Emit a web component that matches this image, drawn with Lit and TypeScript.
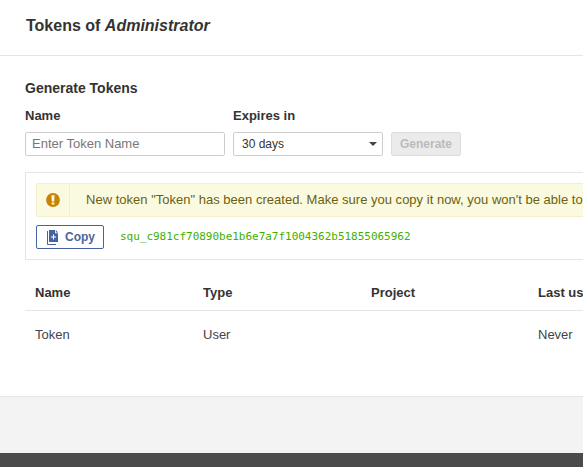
import { LitElement, html, css } from "lit";
import { customElement } from "lit/decorators.js";

@customElement("app-root")
export class AppRoot extends LitElement {
  static styles = css`
    * { box-sizing: border-box; }
    :host {
      display: flex;
      flex-direction: column;
      width: 100%;
      height: 467px;
      overflow: hidden;
      background: #fff;
      color: #444;
      font-family: "Liberation Sans", Arial, sans-serif;
      font-size: 13px;
      line-height: 20px;
    }
    h1, h2 { margin: 0; color: #333; font-weight: 700; }
    header { height: 56px; flex: none; padding: 15px 26px 0; border-bottom: 1px solid #e6e6e6; }
    h1 { font-size: 16px; line-height: 22px; white-space: nowrap; }
    main { height: 341px; flex: none; padding: 22px 0 0 25px; }
    h2 { font-size: 14px; line-height: 20px; }
    form { display: flex; align-items: flex-end; gap: 8px; height: 58px; }
    label { display: flex; flex-direction: column; gap: 6px; font-weight: 700; color: #333; }
    .field {
      display: flex;
      align-items: center;
      height: 24px;
      border: 1px solid #cdcdcd;
      border-radius: 2px;
      font: 400 13px/22px "Liberation Sans", Arial, sans-serif;
      color: #333;
      background: #fff;
    }
    .name { width: 200px; padding: 0 6px 1px; outline: none; }
    .name::placeholder { color: #777; opacity: 1; }
    .select { width: 150px; padding: 0 5px 0 8px; font-size: 12px; justify-content: space-between; }
    .caret { border: 4px solid transparent; border-top-color: #444; border-bottom: 0; }
    .generate {
      width: 70px; height: 24px; padding: 0;
      border: 1px solid #ddd; border-radius: 2px;
      background: #ebebeb; color: #bbb;
      font: 700 12px/22px "Liberation Sans", Arial, sans-serif;
    }
    .panel { height: 88px; margin: 16px -30px 0 0; padding: 10px; border: 1px solid #e6e6e6; }
    .alert { display: flex; height: 34px; border: 1px solid #f4eeca; border-radius: 2px; background: #fafae0; color: #6d5f10; white-space: nowrap; overflow: hidden; }
    .badge { flex: none; width: 33px; border-right: 1px solid #f4eeca; display: flex; align-items: center; justify-content: center; }
    .message { padding-left: 16px; line-height: 32px; letter-spacing: 0.01px; }
    .result { display: flex; align-items: center; gap: 16px; margin-top: 8px; }
    .copy {
      display: flex; align-items: center; gap: 6px;
      width: 68px; height: 24px; padding: 0 0 0 10px;
      border: 1px solid #4563a3; border-radius: 2px; background: #fff; color: #4b66a0;
      font: 700 12px/22px "Liberation Sans", Arial, sans-serif;
    }
    code { font: 11px/20px "DejaVu Sans Mono", monospace; color: #40b000; letter-spacing: -0.02px; }
    svg { display: block; flex: none; }
    .table { margin-top: 15px; }
    .row { display: grid; grid-template-columns: 168px 168px 167px 168px; height: 48px; align-items: center; white-space: nowrap; }
    .row > span { padding-left: 10px; }
    .head { height: 36px; border-bottom: 1px solid #e6e6e6; font-weight: 700; color: #333; }
    .gap { height: 57px; flex: none; border-top: 1px solid #e6e6e6; background: #f3f3f3; margin-top: -1px; }
    footer { flex: 1; background: #4b4b4b; }
  `;

  render() {
    return html`
      <header><h1>Tokens of <em>Administrator</em></h1></header>
      <main>
        <h2>Generate Tokens</h2>
        <form>
          <label>Name<input class="field name" placeholder="Enter Token Name" /></label>
          <label>Expires in<span class="field select">30 days<i class="caret"></i></span></label>
          <button class="generate" type="button">Generate</button>
        </form>
        <section class="panel">
          <div class="alert">
            <div class="badge">
              <svg width="14" height="14" viewBox="0 0 14 14">
                <circle cx="7" cy="7" r="6.9" fill="#c98300" />
                <path d="M5.4 2.2h3.2L8.2 8.4H5.8zM5.7 9.4h2.6v2.2H5.7z" fill="#fafae0" />
              </svg>
            </div>
            <div class="message">New token "Token" has been created. Make sure you copy it now, you won't be able to see it again!</div>
          </div>
          <div class="result">
            <button class="copy" type="button">
              <svg width="12" height="16" viewBox="0 0 12 16">
                <path d="M2 1h6v3.2h3V13H2z" fill="#4563a3" />
                <path d="M8.8 1L11 3.4H8.8z" fill="#4563a3" />
                <path d="M.5 2v13.5H9" fill="none" stroke="#4563a3" />
                <path d="M6.5 5.5v5M4 8h5" stroke="#fff" stroke-width="1.1" />
              </svg>
              Copy
            </button>
            <code>squ_c981cf70890be1b6e7a7f1004362b51855065962</code>
          </div>
        </section>
        <div class="table">
          <div class="row head"><span>Name</span><span>Type</span><span>Project</span><span>Last use</span></div>
          <div class="row"><span>Token</span><span>User</span><span></span><span>Never</span></div>
        </div>
      </main>
      <div class="gap"></div>
      <footer></footer>
    `;
  }
}
